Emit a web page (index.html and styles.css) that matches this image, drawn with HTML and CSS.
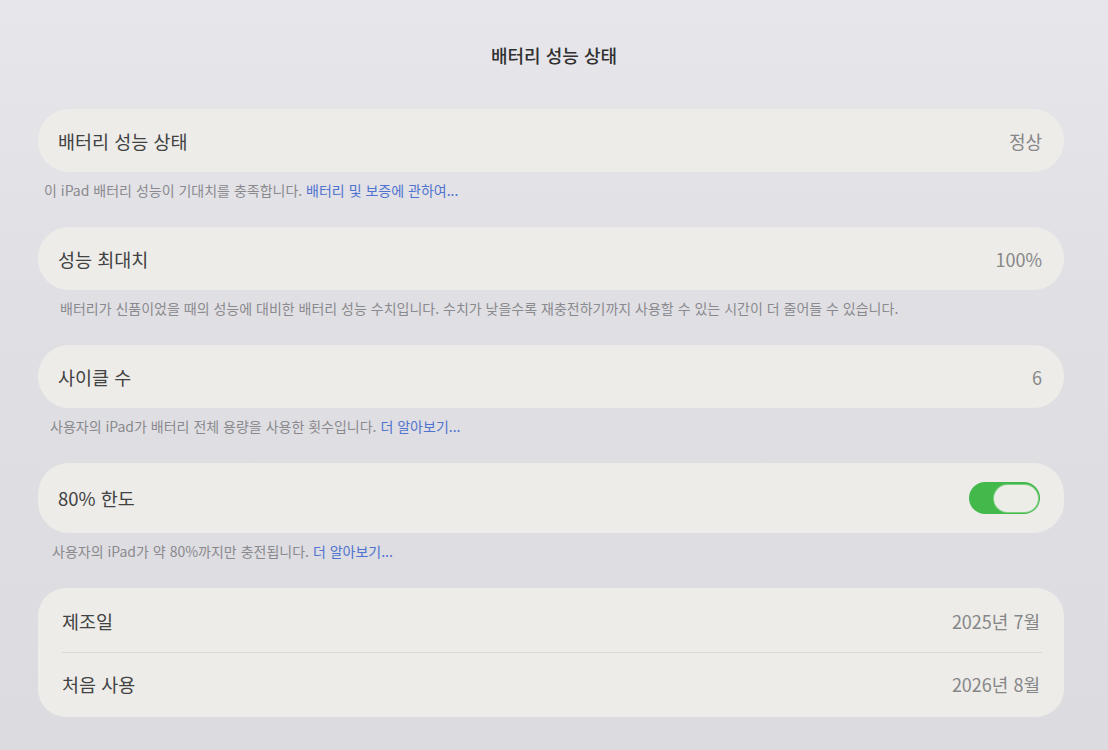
FILE: index.html
```html
<!DOCTYPE html>
<html lang="ko">
<head>
<meta charset="utf-8">
<title>배터리 성능 상태</title>
<link rel="stylesheet" href="styles.css">
</head>
<body>
<div class="page">
  <header class="nav">
    <h1 class="nav-title">배터리 성능 상태</h1>
  </header>

  <section class="group">
    <div class="card">
      <div class="row">
        <span class="label">배터리 성능 상태</span>
        <span class="value">정상</span>
      </div>
    </div>
    <p class="note note-first">이 iPad 배터리 성능이 기대치를 충족합니다. <span class="link">배터리 및 보증에 관하여...</span></p>
  </section>

  <section class="group">
    <div class="card">
      <div class="row">
        <span class="label">성능 최대치</span>
        <span class="value">100%</span>
      </div>
    </div>
    <p class="note note-wide">배터리가 신품이었을 때의 성능에 대비한 배터리 성능 수치입니다. 수치가 낮을수록 재충전하기까지 사용할 수 있는 시간이 더 줄어들 수 있습니다.</p>
  </section>

  <section class="group">
    <div class="card">
      <div class="row">
        <span class="label">사이클 수</span>
        <span class="value">6</span>
      </div>
    </div>
    <p class="note">사용자의 iPad가 배터리 전체 용량을 사용한 횟수입니다. <span class="link">더 알아보기...</span></p>
  </section>

  <section class="group">
    <div class="card">
      <div class="row row-tall">
        <span class="label">80% 한도</span>
        <span class="toggle"><span class="knob"></span></span>
      </div>
    </div>
    <p class="note note-last">사용자의 iPad가 약 80%까지만 충전됩니다. <span class="link">더 알아보기...</span></p>
  </section>

  <section class="group">
    <div class="card card-list">
      <div class="row row-list">
        <span class="label">제조일</span>
        <span class="value">2025년 7월</span>
      </div>
      <div class="divider"></div>
      <div class="row row-list">
        <span class="label">처음 사용</span>
        <span class="value">2026년 8월</span>
      </div>
    </div>
  </section>
</div>
</body>
</html>
```

FILE: styles.css
```css
* {
  box-sizing: border-box;
}

html, body {
  margin: 0;
  padding: 0;
}

body {
  width: 1108px;
  height: 750px;
  overflow: hidden;
  background: linear-gradient(180deg, #e7e6eb 0%, #e0dfe4 40%, #dcdbe0 100%);
  font-family: "Noto Sans CJK KR", "Noto Sans", sans-serif;
  color: #404040;
}

.page {
  padding: 0 44px 0 38px;
}

.nav {
  height: 109px;
  padding-top: 41px;
  display: flex;
  justify-content: center;
}

.nav-title {
  margin: 0;
  font-size: 18px;
  line-height: 28px;
  font-weight: 500;
  color: #303030;
  padding-left: 6px;
}

.group {
  margin-bottom: 28px;
}

.card {
  background: #edece9;
  border-radius: 31px;
}

.row {
  height: 63px;
  display: flex;
  align-items: center;
  justify-content: space-between;
  padding: 0 22px 0 20px;
}

.row-tall {
  height: 70px;
  padding-right: 24px;
}

.label {
  font-size: 18.5px;
  color: #424242;
}

.value {
  font-size: 18px;
  color: #878787;
}

.note {
  margin: 0;
  padding: 9px 0 0 12px;
  font-size: 14px;
  line-height: 18px;
  color: #8a8a8e;
}

.note-first {
  padding-left: 6px;
}

.note-wide {
  padding-left: 22px;
}

.note-last {
  padding-left: 14px;
}

.link {
  color: #4f73cf;
}

.toggle {
  width: 71px;
  height: 32px;
  border-radius: 16px;
  background: #43b94c;
  display: flex;
  align-items: center;
  justify-content: flex-end;
  padding-right: 2px;
}

.knob {
  width: 44px;
  height: 27px;
  border-radius: 14px;
  background: #edede8;
  box-shadow: 0 0 0 1px #7fcf84;
}

.card-list {
  border-radius: 28px;
  padding: 2px 0;
}

.row-list {
  height: 62px;
  padding-left: 24px;
  padding-right: 24px;
}

.divider {
  height: 1px;
  background: #d9d8d6;
  margin: 0 22px 0 24px;
}
```
